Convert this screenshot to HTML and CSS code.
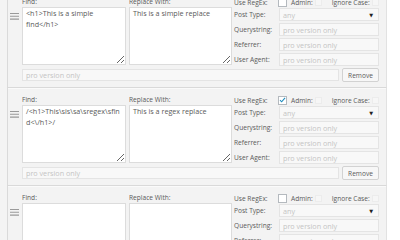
FILE: index.html
```html
<!DOCTYPE html>
<html lang="en">
<head>
    <meta charset="UTF-8">
    <meta name="viewport" content="width=device-width, initial-scale=1.0">
    <title>Find and Replace Rules</title>
    <link rel="stylesheet" href="styles.css">
</head>
<body>
    <div class="rules">
        <div class="rule">
            <div class="rule-top">
                <div class="handle">
                    <svg width="9" height="7" viewBox="0 0 9 7"><path d="M0 0.5H9M0 3.3H9M0 6.1H9" stroke="#9a9a9a" stroke-width="1.1"/></svg>
                </div>
                <div class="col col-find">
                    <label>Find:</label>
                    <textarea>&lt;h1&gt;This is a simple find&lt;/h1&gt;</textarea>
                </div>
                <div class="col col-replace">
                    <label>Replace With:</label>
                    <textarea>This is a simple replace</textarea>
                </div>
                <div class="options">
                    <div class="flags">
                        <span class="flag-label">Use RegEx:</span>
                        <span class="check"></span>
                        <span class="flag-label admin">Admin:</span>
                        <span class="check faint"></span>
                        <span class="flag-label ignore">Ignore Case:</span>
                        <span class="check faint"></span>
                    </div>
                    <div class="field"><span class="field-label">Post Type:</span><div class="select"><span>any</span><span class="arrow">&#9660;</span></div></div>
                    <div class="field"><span class="field-label">Querystring:</span><input disabled placeholder="pro version only"></div>
                    <div class="field"><span class="field-label">Referrer:</span><input disabled placeholder="pro version only"></div>
                    <div class="field"><span class="field-label">User Agent:</span><input disabled placeholder="pro version only"></div>
                </div>
            </div>
            <div class="rule-bottom">
                <input class="pro" disabled placeholder="pro version only">
                <button class="remove">Remove</button>
            </div>
        </div>

        <div class="rule">
            <div class="rule-top">
                <div class="handle">
                    <svg width="9" height="7" viewBox="0 0 9 7"><path d="M0 0.5H9M0 3.3H9M0 6.1H9" stroke="#9a9a9a" stroke-width="1.1"/></svg>
                </div>
                <div class="col col-find">
                    <label>Find:</label>
                    <textarea>/&lt;h1&gt;This\sis\sa\sregex\sfin
d&lt;\/h1&gt;/</textarea>
                </div>
                <div class="col col-replace">
                    <label>Replace With:</label>
                    <textarea>This is a regex replace</textarea>
                </div>
                <div class="options">
                    <div class="flags">
                        <span class="flag-label">Use RegEx:</span>
                        <span class="check checked"><svg width="9" height="8" viewBox="0 0 9 8"><path d="M1.3 4.2L3.4 6.3L7.8 1.2" fill="none" stroke="#1e8cbe" stroke-width="1.4"/></svg></span>
                        <span class="flag-label admin">Admin:</span>
                        <span class="check faint"></span>
                        <span class="flag-label ignore">Ignore Case:</span>
                        <span class="check faint"></span>
                    </div>
                    <div class="field"><span class="field-label">Post Type:</span><div class="select"><span>any</span><span class="arrow">&#9660;</span></div></div>
                    <div class="field"><span class="field-label">Querystring:</span><input disabled placeholder="pro version only"></div>
                    <div class="field"><span class="field-label">Referrer:</span><input disabled placeholder="pro version only"></div>
                    <div class="field"><span class="field-label">User Agent:</span><input disabled placeholder="pro version only"></div>
                </div>
            </div>
            <div class="rule-bottom">
                <input class="pro" disabled placeholder="pro version only">
                <button class="remove">Remove</button>
            </div>
        </div>

        <div class="rule">
            <div class="rule-top">
                <div class="handle">
                    <svg width="9" height="7" viewBox="0 0 9 7"><path d="M0 0.5H9M0 3.3H9M0 6.1H9" stroke="#9a9a9a" stroke-width="1.1"/></svg>
                </div>
                <div class="col col-find">
                    <label>Find:</label>
                    <textarea></textarea>
                </div>
                <div class="col col-replace">
                    <label>Replace With:</label>
                    <textarea></textarea>
                </div>
                <div class="options">
                    <div class="flags">
                        <span class="flag-label">Use RegEx:</span>
                        <span class="check"></span>
                        <span class="flag-label admin">Admin:</span>
                        <span class="check faint"></span>
                        <span class="flag-label ignore">Ignore Case:</span>
                        <span class="check faint"></span>
                    </div>
                    <div class="field"><span class="field-label">Post Type:</span><div class="select"><span>any</span><span class="arrow">&#9660;</span></div></div>
                    <div class="field"><span class="field-label">Querystring:</span><input disabled placeholder="pro version only"></div>
                    <div class="field"><span class="field-label">Referrer:</span><input disabled placeholder="pro version only"></div>
                    <div class="field"><span class="field-label">User Agent:</span><input disabled placeholder="pro version only"></div>
                </div>
            </div>
            <div class="rule-bottom">
                <input class="pro" disabled placeholder="pro version only">
                <button class="remove">Remove</button>
            </div>
        </div>
    </div>
</body>
</html>
```

FILE: styles.css
```css
body {
    margin: 0;
    background-color: #fff;
    font-family: "Open Sans", "DejaVu Sans", sans-serif;
    color: #5a5a5a;
    overflow: hidden;
}
.rules {
    width: 380px;
    margin-top: -11px;
    padding-left: 7px;
    background-color: #f4f4f4;
}
.rule {
    border-left: 1px solid #dadada;
    border-right: 1px solid #e2e2e2;
    border-top: 1px solid #d9d9d9;
    box-shadow: inset 0 1px 0 #fafafa;
    background-color: #f3f3f3;
    padding: 7px 6px 5px 0;
}
.rule-top {
    display: flex;
    height: 69px;
}
.handle {
    width: 14px;
    padding: 16px 0 0 2px;
    box-sizing: border-box;
}
.handle svg {
    display: block;
}
.col {
    display: flex;
    flex-direction: column;
}
.col-find {
    width: 104px;
    margin-right: 3px;
}
.col-replace {
    width: 103px;
    margin-right: 2px;
}
.col label {
    font-size: 6.6px;
    line-height: 10px;
    height: 10px;
}
textarea {
    height: 58px;
    box-sizing: border-box;
    margin: 0;
    padding: 0 3px;
    border: 1px solid #dcdcdc;
    background-color: #fff;
    font-family: "Open Sans", "DejaVu Sans", sans-serif;
    font-size: 7.2px;
    line-height: 11px;
    color: #5a5a5a;
    resize: vertical;
}
.options {
    width: 145px;
}
.flags {
    display: flex;
    align-items: center;
    height: 11px;
    font-size: 6.6px;
    white-space: nowrap;
}
.flag-label {
    width: 44px;
}
.flag-label.admin {
    width: auto;
    margin-left: 4px;
}
.flag-label.ignore {
    width: auto;
    margin-left: 10px;
}
.check {
    flex: none;
    width: 9px;
    height: 9px;
    box-sizing: border-box;
    border: 1px solid #b4b9be;
    background-color: #fff;
    display: flex;
    align-items: center;
    justify-content: center;
}
.check svg {
    margin-top: -1px;
}
.check.faint {
    width: 7px;
    height: 7px;
    margin-left: 2px;
    border-color: #ececec;
    background-color: #f6f6f6;
}
.field {
    display: flex;
    align-items: center;
    margin-bottom: 2px;
}
.field-label {
    width: 45px;
    font-size: 6.6px;
    white-space: nowrap;
}
.select,
.field input {
    width: 100px;
    height: 13px;
    box-sizing: border-box;
    border: 1px solid #e4e4e4;
    background-color: #f8f8f8;
    font-family: "Open Sans", "DejaVu Sans", sans-serif;
    font-size: 7.2px;
    margin: 0;
    padding: 0 3px;
}
.select {
    display: flex;
    align-items: center;
    justify-content: space-between;
    color: #c4c4c4;
}
.arrow {
    color: #222;
    font-size: 5px;
    margin-right: 2px;
}
input::placeholder {
    color: #c4c4c4;
}
.rule-bottom {
    display: flex;
    align-items: center;
    margin: 2px 0 0 14px;
    height: 14px;
}
.pro {
    width: 317px;
    height: 12px;
    box-sizing: border-box;
    margin: 0 3px 0 0;
    padding: 0 3px;
    border: 1px solid #e4e4e4;
    background-color: #f8f8f8;
    font-family: "Open Sans", "DejaVu Sans", sans-serif;
    font-size: 7.2px;
}
.remove {
    width: 37px;
    height: 14px;
    box-sizing: border-box;
    padding: 0;
    border: 1px solid #d2d2d2;
    border-radius: 2px;
    background-color: #f7f7f7;
    font-family: "Open Sans", "DejaVu Sans", sans-serif;
    font-size: 6.6px;
    color: #5a5a5a;
}
```
